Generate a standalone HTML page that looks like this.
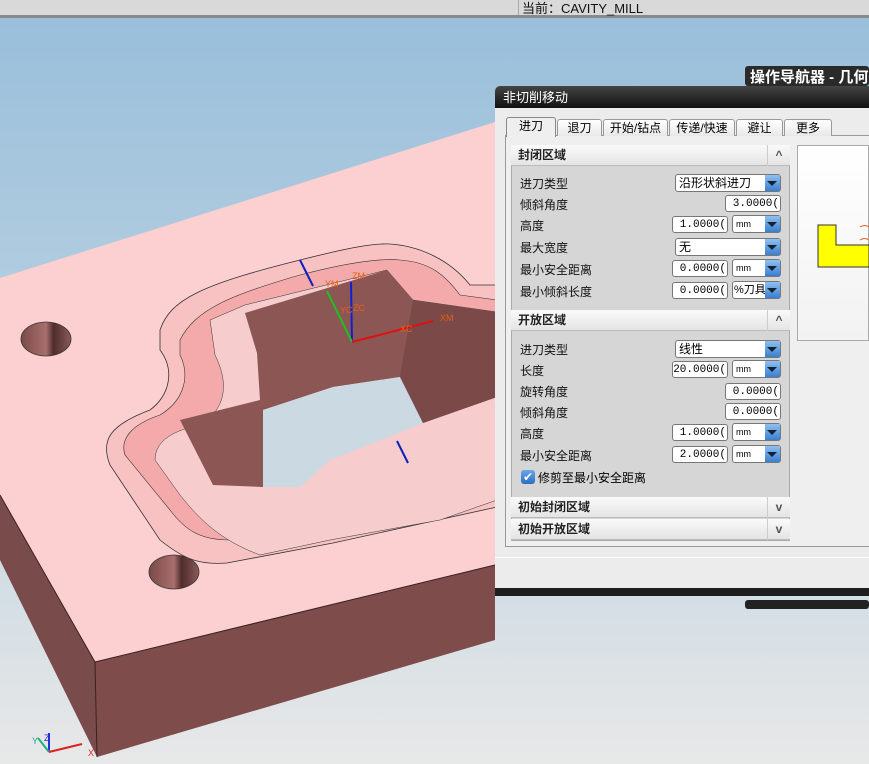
<!DOCTYPE html>
<html><head><meta charset="utf-8"><style>
body{margin:0;width:869px;height:764px;overflow:hidden;position:relative;font-family:"Liberation Sans","Noto Sans CJK SC",sans-serif;font-size:12px;background:#e6e6e6}
.abs{position:absolute}
.lbl{position:absolute;left:520px;font-size:12px;color:#111}
.box{position:absolute;height:17px;background:#fff;border:1px solid #777;border-radius:3px;font-family:"Liberation Mono","Noto Sans CJK SC",monospace;font-size:11px;line-height:16px;text-align:right;padding-right:1px;box-sizing:border-box;overflow:hidden;white-space:nowrap}
.dd{position:absolute;height:18px;background:#fff;border:1px solid #777;border-radius:3px;box-sizing:border-box;font-size:12px;line-height:16px;padding-left:3px}
.dd:after{content:"";position:absolute;right:0;top:0;width:15px;height:16px;background:linear-gradient(#8fc0f0,#3a7fd0);}
.dd i{position:absolute;right:3px;top:6px;width:0;height:0;border-left:5px solid transparent;border-right:5px solid transparent;border-top:5px solid #123;z-index:2}
.hdr{position:absolute;left:511px;width:279px;height:21px;background:linear-gradient(#fafafa,#e4e4e4);border-bottom:1px solid #bbb;font-weight:bold;font-size:12px;line-height:21px;padding-left:7px;box-sizing:border-box;color:#222}
.hdr span{position:absolute;right:0;top:0;width:22px;height:21px;border-left:1px solid #ccc;text-align:center;color:#555;font-weight:bold}
.tab{position:absolute;top:119px;height:16px;border:1px solid #999;border-bottom:none;border-radius:3px 3px 0 0;background:linear-gradient(#fff,#e8e8e8);text-align:center;font-size:12px;line-height:16px}
</style></head><body>
<svg class="abs" style="left:0;top:0" width="869" height="764">
<defs><linearGradient id="bg" x1="0" y1="0" x2="0" y2="1"><stop offset="0" stop-color="#98bedb"/><stop offset="0.45" stop-color="#b6cfe0"/><stop offset="1" stop-color="#e8e8e8"/></linearGradient>
<linearGradient id="h" x1="0" x2="1"><stop offset="0" stop-color="#7a4a48"/><stop offset=".5" stop-color="#a86f6c"/><stop offset=".65" stop-color="#4e2c2b"/><stop offset="1" stop-color="#8a5a58"/></linearGradient></defs>
<rect width="869" height="764" fill="url(#bg)"/>
<rect y="0" width="869" height="16" fill="#d9d9d9"/><rect y="15" width="869" height="3" fill="#8a8a8a"/>
<polygon points="0,278 495,122 495,565 95,662 0,495" fill="#fcd0d0"/>
<polygon points="0,495 95,662 97,757 0,560" fill="#7a4b4b"/>
<polygon points="95,662 495,565 495,640 97,757" fill="#7d4c4b"/>
<polyline points="0,495 95,662 495,565" fill="none" stroke="#3a2222" stroke-width="1"/>
<line x1="95" y1="662" x2="97" y2="757" stroke="#3a2222"/>
<ellipse cx="46" cy="339" rx="25" ry="17" fill="url(#h)" stroke="#333" stroke-width=".8"/>
<ellipse cx="174" cy="572" rx="25" ry="17" fill="url(#h)" stroke="#333" stroke-width=".8"/>
<path d="M160,330 C170,300 200,285 300,260 C340,250 370,243 390,244 C420,246 450,260 470,285 L497,285 L497,507 L333,543 L227,563 C200,565 185,560 160,540 L110,465 C100,440 110,425 150,410 C170,395 175,370 160,350 Z" fill="#f9c2c2" stroke="#333" stroke-width=".8"/>
<path d="M180,340 C195,310 230,295 300,275 C350,262 380,258 400,260 C430,262 445,275 460,295 L497,300 L497,480 L330,520 L230,540 C200,540 185,530 170,510 L125,455 C120,440 130,425 160,415 C185,400 190,375 180,355 Z" fill="#f4aaaa" stroke="#333" stroke-width=".6"/>
<path d="M210,320 L245,305 L387,270 L413,300 L497,312 L497,500 L440,520 L330,540 L260,555 C220,540 200,520 180,495 L155,460 C155,440 175,430 200,425 C225,410 230,385 215,355 Z" fill="#f6cccc" stroke="#333" stroke-width=".5"/>
<polygon points="245,313 387,270 413,300 497,312 497,397 423,423 400,377 333,387 263,410 263,487 213,485 180,420 260,400 257,353" fill="#8b5654"/>
<polygon points="263,410 333,387 400,377 423,423 330,460 300,487 263,487" fill="#cbd9e3"/>
<polygon points="400,377 423,423 497,397 497,312 413,300" fill="#7a4948"/>
<line x1="300" y1="260" x2="313" y2="286" stroke="#1020c0" stroke-width="2"/>
<line x1="397" y1="441" x2="408" y2="463" stroke="#1020c0" stroke-width="2"/>
<line x1="352" y1="342" x2="351" y2="282" stroke="#1020d0" stroke-width="2"/>
<line x1="352" y1="342" x2="327" y2="291" stroke="#20c020" stroke-width="2"/>
<line x1="352" y1="342" x2="433" y2="321" stroke="#e01010" stroke-width="2"/>
<g fill="#e86010" font-size="9" font-family="Liberation Sans"><text x="352" y="279">ZM</text><text x="325" y="287">YM</text><text x="353" y="311">ZC</text><text x="340" y="313">YC</text><text x="400" y="332">XC</text><text x="440" y="321">XM</text></g>
<line x1="49" y1="752" x2="49" y2="733" stroke="#2030e0" stroke-width="2"/><line x1="49" y1="752" x2="38" y2="738" stroke="#20b080" stroke-width="2"/><line x1="49" y1="752" x2="82" y2="744" stroke="#e02020" stroke-width="2"/>
<g font-size="9" font-family="Liberation Sans"><text x="44" y="741" fill="#2030e0">Z</text><text x="32" y="744" fill="#20a080">Y</text><text x="88" y="756" fill="#e02020">X</text></g>
<rect x="745" y="66" width="124" height="20" rx="3" fill="#2a2a2a"/>
<rect x="745" y="600" width="124" height="9" rx="3" fill="#222"/>
</svg>
<div class="abs" style="left:518px;top:0;width:1px;height:15px;background:#aaa"></div>
<div class="abs" style="left:522px;top:-2px;font-size:13px;color:#111">当前：CAVITY_MILL</div>
<div class="abs" style="left:750px;top:66px;color:#fff;font-weight:bold;font-size:15px;white-space:nowrap">操作导航器 - 几何</div>
<div class="abs" style="left:495px;top:86px;width:374px;height:510px;background:#ececec;border-radius:5px 0 0 5px"></div>
<div class="abs" style="left:495px;top:86px;width:374px;height:22px;background:linear-gradient(#444,#111);border-radius:5px 0 0 0;color:#fff;font-size:13px;line-height:24px;padding-left:8px;box-sizing:border-box">非切削移动</div>
<div class="abs" style="left:495px;top:588px;width:374px;height:8px;background:#1e1e1e"></div>
<div class="abs" style="left:505px;top:135px;width:364px;height:412px;border:1px solid #999;border-right:none;box-sizing:border-box;background:#efefef"></div>
<div class="abs" style="left:495px;top:557px;width:374px;height:1px;background:#fff"></div>
<div class="tab" style="left:506px;width:48px;top:117px;height:19px;background:#efefef;border-color:#888">进刀</div>
<div class="tab" style="left:557px;width:43px">退刀</div>
<div class="tab" style="left:603px;width:63px">开始/钻点</div>
<div class="tab" style="left:669px;width:64px">传递/快速</div>
<div class="tab" style="left:736px;width:45px">避让</div>
<div class="tab" style="left:784px;width:46px">更多</div>
<div class="abs" style="left:511px;top:145px;width:279px;height:396px;background:#d6d6d6;border:1px solid #aaa;box-sizing:border-box"></div>
<div class="abs" style="left:797px;top:145px;width:72px;height:196px;background:linear-gradient(#fff,#f2f2f2);border:1px solid #aaa;box-sizing:border-box"></div>
<svg class="abs" style="left:797px;top:145px" width="72" height="196"><polygon points="21,80 39,80 39,100 72,100 72,122 21,122" fill="#ffff00" stroke="#333"/><path d="M63,82 q5,-3 9,0 M63,95 q5,-3 9,0" stroke="#e06020" fill="none"/></svg>
<div class="hdr" style="top:145px">封闭区域<span>^</span></div>
<div class="lbl" style="top:175px">进刀类型</div><div class="dd" style="left:675px;top:174px;width:106px">沿形状斜进刀<i></i></div>
<div class="lbl" style="top:196px">倾斜角度</div><div class="box" style="left:725px;top:195px;width:56px">3.0000(</div>
<div class="lbl" style="top:217px">高度</div><div class="box" style="left:672px;top:216px;width:56px">1.0000(</div><div class="dd" style="left:732px;top:215px;width:49px;font-size:9px">mm<i></i></div>
<div class="lbl" style="top:239px">最大宽度</div><div class="dd" style="left:675px;top:238px;width:106px">无<i></i></div>
<div class="lbl" style="top:261px">最小安全距离</div><div class="box" style="left:672px;top:260px;width:56px">0.0000(</div><div class="dd" style="left:732px;top:259px;width:49px;font-size:9px">mm<i></i></div>
<div class="lbl" style="top:283px">最小倾斜长度</div><div class="box" style="left:672px;top:282px;width:56px">0.0000(</div><div class="dd" style="left:732px;top:281px;width:49px;font-size:11px;padding-left:1px">%刀具<i></i></div>
<div class="hdr" style="top:310px">开放区域<span>^</span></div>
<div class="lbl" style="top:341px">进刀类型</div><div class="dd" style="left:675px;top:340px;width:106px">线性<i></i></div>
<div class="lbl" style="top:362px">长度</div><div class="box" style="left:672px;top:361px;width:56px">20.0000(</div><div class="dd" style="left:732px;top:360px;width:49px;font-size:9px">mm<i></i></div>
<div class="lbl" style="top:383px">旋转角度</div><div class="box" style="left:725px;top:383px;width:56px">0.0000(</div>
<div class="lbl" style="top:404px">倾斜角度</div><div class="box" style="left:725px;top:403px;width:56px">0.0000(</div>
<div class="lbl" style="top:425px">高度</div><div class="box" style="left:672px;top:424px;width:56px">1.0000(</div><div class="dd" style="left:732px;top:423px;width:49px;font-size:9px">mm<i></i></div>
<div class="lbl" style="top:447px">最小安全距离</div><div class="box" style="left:672px;top:446px;width:56px">2.0000(</div><div class="dd" style="left:732px;top:445px;width:49px;font-size:9px">mm<i></i></div>
<div class="abs" style="left:521px;top:470px;width:14px;height:14px;border-radius:3px;background:linear-gradient(#6aa8e8,#2a6cc0);color:#fff;font-size:12px;line-height:14px;text-align:center">✔</div>
<div class="abs" style="left:538px;top:469px">修剪至最小安全距离</div>
<div class="hdr" style="top:497px">初始封闭区域<span>v</span></div>
<div class="hdr" style="top:519px">初始开放区域<span>v</span></div>
</body></html>
